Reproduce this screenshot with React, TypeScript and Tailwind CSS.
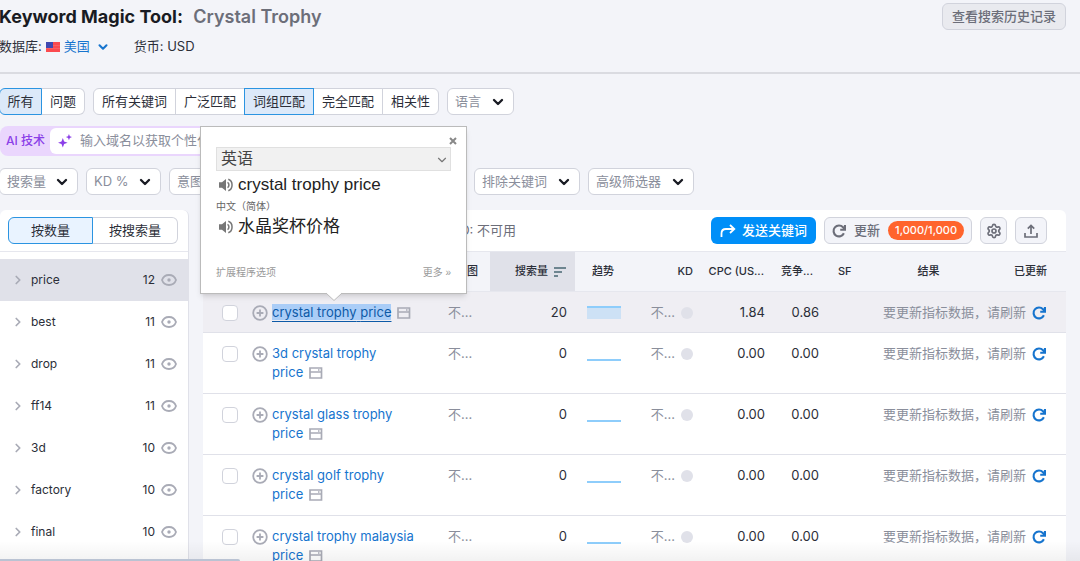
import React from "react";
import { ChevronDown, ChevronRight, Settings } from "lucide-react";

const GROUPS = [
  { name: "price", count: 12 },
  { name: "best", count: 11 },
  { name: "drop", count: 11 },
  { name: "ff14", count: 11 },
  { name: "3d", count: 10 },
  { name: "factory", count: 10 },
  { name: "final", count: 10 },
];

const KEYWORDS = [
  { lead: "crystal trophy", volume: 20, cpc: "1.84", competition: "0.86" },
  { lead: "3d crystal trophy", volume: 0, cpc: "0.00", competition: "0.00" },
  { lead: "crystal glass trophy", volume: 0, cpc: "0.00", competition: "0.00" },
  { lead: "crystal golf trophy", volume: 0, cpc: "0.00", competition: "0.00" },
  { lead: "crystal trophy malaysia", volume: 0, cpc: "0.00", competition: "0.00" },
];

const MATCH_TYPES = ["所有关键词", "广泛匹配", "词组匹配", "完全匹配", "相关性"];

// ─── Icons ──────────────────────────────────────────────────────────────────
function RefreshIcon({ className }: { className: string }) {
  return (
    <svg viewBox="0 0 16 16" className={className} fill="none" stroke="currentColor" strokeWidth="2.4" aria-hidden="true">
      <path d="M13.6 10.6A6.2 6.2 0 1 1 12.6 3.8L14 5.4" />
      <path d="M14.8 1v5.500H9.400" />
    </svg>
  );
}

function EyeIcon() {
  return (
    <svg viewBox="0 0 16 12" className="h-3 w-4 text-[#a9abb6]" fill="none" stroke="currentColor" strokeWidth="1.8" aria-hidden="true">
      <path d="M1 6c1.1-3.2 3.7-5 7-5s5.900 1.800 7 5c-1.100 3.200-3.700 5-7 5S2.100 9.200 1 6Z" />
      <circle cx="8" cy="6" r="1.700" fill="currentColor" stroke="none" />
    </svg>
  );
}

function PlusCircleIcon() {
  return (
    <svg viewBox="0 0 16 16" className="size-4 text-[#a9abb6]" fill="none" stroke="currentColor" strokeWidth="1.8" aria-hidden="true">
      <circle cx="8" cy="8" r="6.800" />
      <path d="M8 4.600v6.800M4.600 8h6.800" />
    </svg>
  );
}

function SerpIcon() {
  return (
    <svg viewBox="0 0 14 12" className="ml-1.5 inline-block h-3 w-3.5 align-[-2px] text-[#a9abb6]" fill="none" stroke="currentColor" strokeWidth="1.7" aria-hidden="true">
      <path d="M1 1h11.500v10H1zM1 5h11.500M9 3h1.500" />
    </svg>
  );
}

function SparkIcon() {
  return (
    <svg viewBox="0 0 16 16" className="size-3.5 text-[#8b3fe8]" fill="currentColor" aria-hidden="true">
      <path d="M5.500 4.500 7 8.500l4 1.500-4 1.500-1.500 4-1.500-4L0 10l4-1.500zM12.500 0l1 2.500L16 3.500l-2.500 1-1 2.500-1-2.500-2.500-1 2.500-1z" />
    </svg>
  );
}

function SpeakerIcon() {
  return (
    <svg viewBox="0 0 16 14" className="h-3.5 w-4 text-[#777]" fill="currentColor" aria-hidden="true">
      <path d="M1 4.300h3L8 1v12L4 9.700H1z" />
      <path d="M9.500 4.300c1.900 1.100 1.900 4.300 0 5.400M10.300 1.300c5 1.600 5 9.800 0 11.400" fill="none" stroke="currentColor" strokeWidth="1.500" />
    </svg>
  );
}

function FlagIcon() {
  return (
    <svg viewBox="0 0 14 10" className="h-2.5 w-3.5" aria-hidden="true">
      <rect width="14" height="10" fill="#fb4a4f" />
      <path d="M0 3.500h14M0 6.500h14" stroke="#f9696d" strokeWidth=".7" />
      <rect width="7" height="6" fill="#3f48b0" />
    </svg>
  );
}

// ─── Controls ───────────────────────────────────────────────────────────────
interface FilterSelectProps {
  label: string;
  width: string;
}

function FilterSelect({ label, width }: FilterSelectProps) {
  return (
    <div className={`relative ${width}`}>
      <select aria-label={label} className="block h-[27px] w-full appearance-none rounded-md border border-[#d1d3dc] bg-white pl-[7px] text-[13px] text-[#8a8e9b]">
        <option>{label}</option>
      </select>
      <ChevronDown strokeWidth={3.5} className="pointer-events-none absolute top-1.5 right-2 size-4 text-[#191b23]" />
    </div>
  );
}

function TranslatePopup() {
  return (
    <div role="dialog" aria-label="翻译" className="absolute top-[126px] left-[200px] z-10 flex h-[168px] w-[267px] flex-col border border-[#bbb] bg-white px-[15px] pt-2 pb-3 font-['Liberation_Sans','Noto_Sans_CJK_SC',sans-serif] text-[#222] shadow-md">
      <button aria-label="关闭" className="-mr-2 flex h-3 w-3 items-center justify-center self-end text-[#888]">
        <svg viewBox="0 0 8 8" className="size-2" stroke="currentColor" strokeWidth="2" aria-hidden="true">
          <path d="m1 1 6 6M7 1 1 7" />
        </svg>
      </button>
      <div className="relative">
        <select aria-label="源语言" className="h-6 w-full appearance-none border border-[#e0e0e0] bg-[#f1f1f1] pl-1 text-base leading-5 text-[#444]">
          <option>英语</option>
        </select>
        <ChevronDown className="pointer-events-none absolute top-1.5 right-0.5 size-3.5 text-[#777]" />
      </div>
      <div className="mt-1 flex h-5 items-center gap-1 pl-0.5">
        <button aria-label="朗读原文"><SpeakerIcon /></button>
        <span className="text-[17px]">crystal trophy price</span>
      </div>
      <div className="mt-1 h-4 text-[10px] leading-4 text-[#666]">中文（简体）</div>
      <div className="mt-0.5 flex h-5 items-center gap-1 pl-0.5">
        <button aria-label="朗读译文"><SpeakerIcon /></button>
        <span className="text-[17px]">水晶奖杯价格</span>
      </div>
      <div className="mt-auto flex justify-between text-[10px] leading-4 text-[#999]">
        <a href="#options">扩展程序选项</a>
        <a href="#more">更多 »</a>
      </div>
      <svg viewBox="0 0 16 9" className="absolute top-[165px] left-[125px] h-[9px] w-4" aria-hidden="true">
        <path d="M0 0h16v1L8 8.500 0 1z" fill="#fff" />
        <path d="m0 1 8 7.500L16 1" fill="none" stroke="#bbb" />
      </svg>
    </div>
  );
}

// ─── Panels ─────────────────────────────────────────────────────────────────
function Sidebar() {
  return (
    <aside className="w-[189px] shrink-0 rounded-t-md border-r border-[#e0e1e9] bg-white">
      <div className="flex border-b border-[#e6e7ee] py-[7px] pr-2.5 pl-2 text-[13px]">
        <button className="h-[27px] w-1/2 rounded-l-md border border-[#2b94e1] bg-[#e9f3ff]">按数量</button>
        <button className="h-[27px] w-1/2 rounded-r-md border border-l-0 border-[#d1d3dc]">按搜索量</button>
      </div>
      <ul className="mt-[7px] text-xs">
        {GROUPS.map((group, i) => (
          <li key={group.name} className={`flex h-[42px] items-center px-[11px] ${i === 0 ? "bg-[#e0e1e9]" : ""}`}>
            <ChevronRight strokeWidth={3} className="size-3.5 text-[#a9abb6]" />
            <span className="ml-1.5 flex-1">{group.name}</span>
            <span className="mr-1.5">{group.count}</span>
            <button aria-label={`隐藏 ${group.name}`}><EyeIcon /></button>
          </li>
        ))}
      </ul>
    </aside>
  );
}

function Toolbar() {
  return (
    <div className="flex items-center py-[7px] pr-[19px] text-[13px]">
      <span className="w-[313px] text-right text-[#6c6e79]">平均 KD: 不可用</span>
      <div className="ml-auto flex gap-2">
        <button className="flex h-[27px] items-center gap-1.5 rounded-md bg-[#008ff8] pr-[9px] pl-[9px] font-medium text-white">
          <svg viewBox="0 0 16 14" className="h-3.5 w-4" fill="none" stroke="currentColor" strokeWidth="1.800" aria-hidden="true">
            <path d="M1.500 13V9.500C1.500 6.500 3 5 6 5h8M10 1l4.300 4L10 9" />
          </svg>
          发送关键词
        </button>
        <button className="flex h-[27px] items-center gap-2 rounded-md border border-[#d1d3dc] bg-[#f3f4f9] px-[7px] font-medium text-[#6c6e79]">
          <RefreshIcon className="size-3.5" />
          更新
          <span className="rounded-full bg-[#ff642d] px-[7px] text-[11px] leading-[19px] font-medium text-white">1,000/1,000</span>
        </button>
        <button aria-label="设置" className="flex h-[27px] w-[27px] items-center justify-center rounded-md border border-[#d1d3dc] bg-[#f3f4f9] text-[#6c6e79]">
          <Settings strokeWidth={2.5} className="size-4" />
        </button>
        <button aria-label="导出" className="flex h-[27px] w-8 items-center justify-center rounded-md border border-[#d1d3dc] bg-[#f3f4f9] text-[#6c6e79]">
          <svg viewBox="0 0 14 14" className="size-3.5" fill="none" stroke="currentColor" strokeWidth="1.700" aria-hidden="true">
            <path d="M1 9v4h12V9M7 10V1.500M3.800 4.700 7 1.500l3.200 3.200" />
          </svg>
        </button>
      </div>
    </div>
  );
}

function KeywordTable() {
  return (
    <table className="w-full table-fixed border-collapse text-[13px]">
      <colgroup>
        <col className="w-12" />
        <col />
        <col className="w-[52px]" />
        <col className="w-[85px]" />
        <col className="w-[62px]" />
        <col className="w-[64px]" />
        <col className="w-[72px]" />
        <col className="w-[53px]" />
        <col className="w-[42px]" />
        <col className="w-[121px]" />
        <col className="w-[77px]" />
      </colgroup>
      <thead className="bg-[#f3f4f9] text-[11px]">
        <tr className="h-10 border-y border-[#e6e7ee] [&>th]:font-medium [&>th]:whitespace-nowrap">
          <td />
          <th aria-label="关键词" />
          <th className="pr-3 text-right">意图</th>
          <th className="bg-[#e0e1e9] pr-[9px]">
            <span className="flex items-center justify-end gap-1.5">
              搜索量
              <svg viewBox="0 0 12 10" className="h-2.5 w-3 text-[#6e8590]" stroke="currentColor" strokeWidth="1.800" aria-hidden="true">
                <path d="M0 1h12M0 5h8M0 9h4" />
              </svg>
            </span>
          </th>
          <th className="pl-[17px] text-left">趋势</th>
          <th className="pr-2 text-right">KD</th>
          <th className="pr-[9px] text-right">CPC (US...</th>
          <th className="pr-[13px] text-right">竞争...</th>
          <th className="pl-3 text-left">SF</th>
          <th>结果</th>
          <th className="pr-[19px] text-right">已更新</th>
        </tr>
      </thead>
      <tbody>
        {KEYWORDS.map((row, i) => (
          <tr key={row.lead} className={`border-b border-[#e0e1e9] align-top leading-[19px] [&>td]:pt-[11px] ${i === 0 ? "h-[41px] bg-[#efeef3]" : "h-[61px]"}`}>
            <td className="pl-[19px]">
              <input type="checkbox" aria-label={`${row.lead} price`} className="mt-0.5 block size-4 appearance-none rounded-sm border border-[#d1d3dc] bg-white" />
            </td>
            <td className="pr-3 pl-px">
              <div className="flex items-start gap-1">
                <button aria-label="添加到列表" className="mt-0.5 shrink-0"><PlusCircleIcon /></button>
                <div className="pr-3">
                  <a href="#keyword" className={i === 0 ? "bg-[#aacdf7] text-[#0d5aa7] underline underline-offset-4" : "text-[#1674ce]"}>
                    {row.lead} <span className="whitespace-nowrap">price{i > 0 && <SerpIcon />}</span>
                  </a>
                  {i === 0 && <SerpIcon />}
                </div>
              </div>
            </td>
            <td className="pl-2.5 text-[#8a8e9b]">不...</td>
            <td className="pr-2 text-right">{row.volume}</td>
            <td className="pl-3">
              <svg viewBox="0 0 34 14" className="mt-[3px] h-3.5 w-[34px]" aria-hidden="true">
                {i === 0 && <rect width="34" height="13" fill="#cde1f5" />}
                <path d={i === 0 ? "M0 1h34" : "M0 13h34"} stroke="#8ecdfb" strokeWidth="2" />
              </svg>
            </td>
            <td className="pr-2 text-[#8a8e9b]">
              <span className="flex items-center justify-end gap-1.5">
                不... <span className="size-3 rounded-full bg-[#e0e1e9]" />
              </span>
            </td>
            <td className="pr-2 text-right">{row.cpc}</td>
            <td className="pr-[7px] text-right">{row.competition}</td>
            <td />
            <td colSpan={2} className="pr-5 text-[#8a8e9b]">
              <span className="flex items-center justify-end gap-1.5 whitespace-nowrap">
                要更新指标数据，请刷新
                <button aria-label="刷新" className="text-[#1674ce]"><RefreshIcon className="size-3.5" /></button>
              </span>
            </td>
          </tr>
        ))}
      </tbody>
    </table>
  );
}

export default function App() {
  return (
    <div className="relative flex h-screen flex-col overflow-hidden bg-[#f3f4f9] font-[Inter,'Noto_Sans_CJK_SC',sans-serif] text-[#2b2e38]">
      <header className="border-b-2 border-[#dadbe1] pt-[3px] pr-3.5 pb-[15px]">
        <div className="-ml-px flex items-start justify-between">
          <h1 className="text-lg leading-7 font-bold text-[#191b23]">
            Keyword Magic Tool: <span className="ml-1.5 font-semibold text-[#6c6e79]">Crystal Trophy</span>
          </h1>
          <button className="h-[27px] rounded-md border border-[#d1d3dc] bg-[#e9eaef] px-[9px] text-[13px] font-medium text-[#6c6e79]">查看搜索历史记录</button>
        </div>
        <div className="mt-1.5 -ml-px flex h-5 items-center text-[13px]">
          <span>数据库:</span>
          <button className="ml-1 flex items-center gap-1 text-[#1674ce]">
            <FlagIcon />
            美国
            <ChevronDown strokeWidth={3.5} className="ml-0.5 size-3.5" />
          </button>
          <span className="ml-6">货币: USD</span>
        </div>
      </header>

      <div className="mt-3.5 -ml-px flex gap-2 text-[13px]">
        <div className="flex">
          <button className="h-[27px] w-[43px] rounded-l-md border border-[#2b94e1] bg-[#dce9f9]">所有</button>
          <button className="h-[27px] w-[43px] rounded-r-md border border-l-0 border-[#d1d3dc] bg-white">问题</button>
        </div>
        <div className="flex">
          {MATCH_TYPES.map((type) => (
            <button
              key={type}
              className={`h-[27px] border px-2 first:rounded-l-md last:rounded-r-md not-first:-ml-px ${type === "词组匹配" ? "z-[1] border-[#2b94e1] bg-[#dce9f9]" : "border-[#d1d3dc] bg-white"}`}
            >
              {type}
            </button>
          ))}
        </div>
        <FilterSelect label="语言" width="w-[67px]" />
      </div>

      <div className="mt-[11px] flex h-[30px] w-[440px] items-center rounded-lg bg-[#ead6fd] p-0.5">
        <label htmlFor="ai-domain" className="w-12 pl-1 text-xs font-medium text-[#8b3fe8]">AI 技术</label>
        <div className="flex h-[26px] flex-1 items-center gap-2 rounded-md bg-white pl-2">
          <SparkIcon />
          <input id="ai-domain" placeholder="输入域名以获取个性化数据" className="flex-1 text-[13px] outline-none placeholder:text-[#8a8e9b]" />
        </div>
      </div>

      <div className="mt-3 -ml-px flex gap-2">
        <FilterSelect label="搜索量" width="w-[79px]" />
        <FilterSelect label="KD %" width="w-[75px]" />
        <FilterSelect label="意图" width="w-[297px]" />
        <FilterSelect label="排除关键词" width="w-[106px]" />
        <FilterSelect label="高级筛选器" width="w-[106px]" />
      </div>

      <main className="mt-[15px] flex flex-1 items-stretch gap-3.5 pr-3.5">
        <Sidebar />
        <section className="min-w-0 flex-1 rounded-t-md bg-white">
          <Toolbar />
          <KeywordTable />
        </section>
      </main>

      <TranslatePopup />
      <div className="pointer-events-none absolute inset-x-0 bottom-0 h-5 bg-gradient-to-t from-black/5 to-transparent">
        <div className="absolute bottom-0 left-0 h-0.5 w-60 rounded-tr-sm bg-[#bac3d3]" />
      </div>
    </div>
  );
}
